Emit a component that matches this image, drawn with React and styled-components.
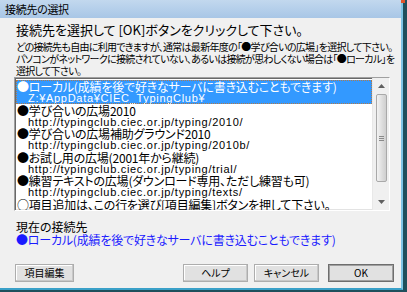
import React from 'react';
import styled, { createGlobalStyle } from 'styled-components';

const GlobalStyle = createGlobalStyle`
  html, body {
    margin: 0;
    padding: 0;
    background: #1f4f5c;
  }
  body {
    width: 407px;
    height: 292px;
    overflow: hidden;
  }
`;

const jp = `"Noto Sans CJK JP", "Noto Sans", sans-serif`;

const Window = styled.div`
  width: 403px;
  height: 290px;
  box-sizing: border-box;
  background: #f0f0f0;
  border-right: 2px solid #7fc4e6;
  border-bottom: 2px solid #3aa0c8;
  display: flex;
  flex-direction: column;
  position: relative;
  font-family: ${jp};
  font-feature-settings: "palt";
  color: #000;
`;

const CloseHint = styled.div`
  position: absolute;
  top: 0;
  right: -4px;
  width: 4px;
  height: 3px;
  background: #e0562c;
`;

const TitleBar = styled.div`
  height: 18px;
  flex: none;
  background: linear-gradient(#c2d8ee, #a8c6e6);
  display: flex;
  align-items: center;
  padding-left: 5px;
  font-size: 11px;
  letter-spacing: -0.3px;
  color: #000;
`;

const Body = styled.div`
  flex: 1;
  display: flex;
  flex-direction: column;
  padding: 2px 7px 0 14px;
  min-height: 0;
`;

const Heading = styled.div`
  font-size: 13px;
  line-height: 20px;
  padding-left: 2px;
  white-space: nowrap;
`;

const Notes = styled.div`
  padding: 1px 0 0 2px;
`;

const Note = styled.div`
  font-size: 10px;
  line-height: 12px;
  letter-spacing: -0.7px;
  white-space: nowrap;
`;

const ListBox = styled.div`
  height: 134px;
  flex: none;
  box-sizing: border-box;
  border-top: 1px solid #a0a0a0;
  border-left: 1px solid #a0a0a0;
  border-right: 1px solid #fff;
  border-bottom: 1px solid #fff;
  box-shadow: inset 1px 1px 0 #696969, inset -1px -1px 0 #e3e3e3;
  background: #fff;
  display: flex;
  overflow: hidden;
  margin-right: 4px;
`;

const Items = styled.div`
  flex: 1;
  padding: 2px 0 0 1px;
  overflow: hidden;
`;

const Item = styled.div`
  background: ${p => (p.$selected ? '#3399ff' : 'transparent')};
  color: ${p => (p.$selected ? '#fff' : '#000')};
  outline: ${p => (p.$selected ? '1px dotted #b07a4a' : 'none')};
  outline-offset: -1px;
  padding-left: 1px;
`;

const MainLine = styled.div`
  font-size: 12px;
  line-height: 14px;
  height: 14px;
  white-space: nowrap;
  letter-spacing: -0.2px;
`;

const SubLine = styled.div`
  font-family: "Liberation Sans", Arial, sans-serif;
  font-size: 11px;
  line-height: 9.5px;
  height: 9.5px;
  padding-left: 11px;
  letter-spacing: 0.7px;
  white-space: nowrap;
`;

const ScrollBar = styled.div`
  width: 16px;
  flex: none;
  background: #f0f0f0;
  display: flex;
  flex-direction: column;
  align-items: center;
  border-left: 1px solid #e8e8e8;
`;

const Arrow = styled.div`
  width: 16px;
  height: 16px;
  display: flex;
  align-items: center;
  justify-content: center;
  flex: none;
`;

const Track = styled.div`
  flex: 1;
  width: 16px;
  display: flex;
  flex-direction: column;
  justify-content: flex-start;
  align-items: center;
`;

const Thumb = styled.div`
  width: 11px;
  height: 88px;
  box-sizing: border-box;
  border: 1px solid #a9a9a9;
  border-radius: 2px;
  background: linear-gradient(90deg, #f3f3f3, #dcdcdc 60%, #cfcfcf);
  display: flex;
  align-items: center;
  justify-content: center;
`;

const Current = styled.div`
  margin-top: 9px;
  font-size: 12px;
  line-height: 13px;
  padding-left: 2px;
`;

const CurrentValue = styled.div`
  font-size: 12px;
  line-height: 13px;
  padding-left: 2px;
  letter-spacing: -0.2px;
  color: #1a1aff;
  white-space: nowrap;
`;

const ButtonRow = styled.div`
  display: flex;
  margin-top: 18px;
  padding-left: 1px;
`;

const Button = styled.button`
  width: ${p => p.$w}px;
  height: 18px;
  margin-left: ${p => p.$ml || 0}px;
  box-sizing: border-box;
  background: #e1e1e1;
  border: 1px solid ${p => (p.$default ? '#6e6e6e' : '#adadad')};
  box-shadow: ${p => (p.$default ? 'inset 0 0 0 1px #a0a0a0' : 'inset -1px -1px 0 #c8c8c8, inset 1px 1px 0 #fff')};
  font-family: ${jp};
  font-feature-settings: "palt";
  font-size: 10px;
  line-height: 14px;
  padding: 0;
  color: #000;
`;

const ArrowIcon = ({ down }) => (
  <svg width="7" height="4" viewBox="0 0 7 4">
    <path d={down ? 'M0 0h7L3.5 4z' : 'M3.5 0L7 4H0z'} fill="#606060" />
  </svg>
);

const Grip = () => (
  <svg width="5" height="5" viewBox="0 0 5 5">
    <path d="M0 0.5h5M0 2.5h5M0 4.5h5" stroke="#8a8a8a" strokeWidth="1" />
  </svg>
);

const entries = [
  { main: '●ローカル(成績を後で好きなサーバに書き込むこともできます)', sub: 'Z:¥AppData¥CIEC_TypingClub¥', selected: true },
  { main: '●学び合いの広場2010', sub: 'http://typingclub.ciec.or.jp/typing/2010/' },
  { main: '●学び合いの広場補助グラウンド2010', sub: 'http://typingclub.ciec.or.jp/typing/2010b/' },
  { main: '●お試し用の広場(2001年から継続)', sub: 'http://typingclub.ciec.or.jp/typing/trial/' },
  { main: '●練習テキストの広場(ダウンロード専用、ただし練習も可)', sub: 'http://typingclub.ciec.or.jp/typing/texts/' },
  { main: '○項目追加は、この行を選び[項目編集]ボタンを押して下さい。' },
];

const App = () => (
  <>
    <GlobalStyle />
    <Window>
      <CloseHint />
      <TitleBar>接続先の選択</TitleBar>
      <Body>
        <Heading>接続先を選択して [OK]ボタンをクリックして下さい。</Heading>
        <Notes>
          <Note>どの接続先も自由に利用できますが、通常は最新年度の「●学び合いの広場」を選択して下さい。</Note>
          <Note>パソコンがネットワークに接続されていない、あるいは接続が思わしくない場合は「●ローカル」を</Note>
          <Note>選択して下さい。</Note>
        </Notes>
        <ListBox>
          <Items>
            {entries.map((e, i) => (
              <Item key={i} $selected={e.selected}>
                <MainLine>{e.main}</MainLine>
                {e.sub && <SubLine>{e.sub}</SubLine>}
              </Item>
            ))}
          </Items>
          <ScrollBar>
            <Arrow><ArrowIcon /></Arrow>
            <Track>
              <Thumb><Grip /></Thumb>
            </Track>
            <Arrow><ArrowIcon down /></Arrow>
          </ScrollBar>
        </ListBox>
        <Current>現在の接続先</Current>
        <CurrentValue>●ローカル(成績を後で好きなサーバに書き込むこともできます)</CurrentValue>
        <ButtonRow>
          <Button $w={59}>項目編集</Button>
          <Button $w={65} $ml={109}>ヘルプ</Button>
          <Button $w={65} $ml={6}>キャンセル</Button>
          <Button $w={66} $ml={9} $default>OK</Button>
        </ButtonRow>
      </Body>
    </Window>
  </>
);

export default App;
